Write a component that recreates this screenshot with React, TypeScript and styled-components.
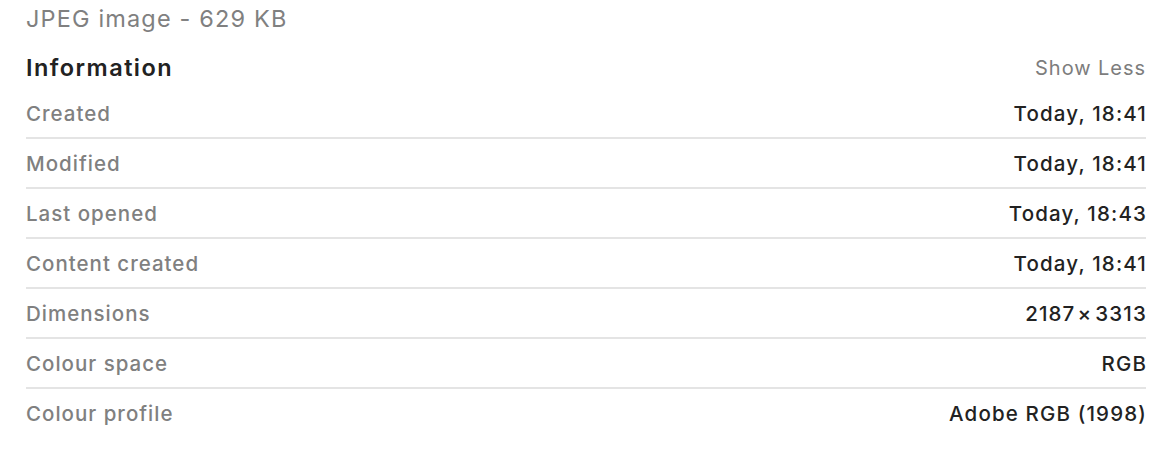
import React from "react";
import styled, { createGlobalStyle } from "styled-components";

const Global = createGlobalStyle`
  html, body { margin: 0; padding: 0; background: #ffffff; }
  body { font-family: Inter, "Noto Sans", "Liberation Sans", sans-serif; -webkit-font-smoothing: antialiased; }
`;

const Panel = styled.div`
  display: flex;
  flex-direction: column;
  padding: 0 28px 0 26px;
  width: 1174px;
  box-sizing: border-box;
`;

const FileKind = styled.div`
  font-size: 23.5px;
  font-weight: 400;
  letter-spacing: 1.15px;
  color: #808080;
  line-height: 37px;
  height: 37px;
`;

const SectionHeader = styled.div`
  display: flex;
  justify-content: space-between;
  align-items: center;
  height: 54px;
  margin-top: 3px;
  margin-bottom: -5px;
`;

const SectionTitle = styled.div`
  font-size: 23.5px;
  font-weight: 600;
  letter-spacing: 1.45px;
  color: #222222;
`;

const ToggleLink = styled.button`
  border: none;
  background: none;
  padding: 0;
  margin-top: 2px;
  font-family: inherit;
  font-size: 20px;
  font-weight: 400;
  letter-spacing: 0.95px;
  color: #7d7d7d;
  cursor: pointer;
`;

const Row = styled.div<{ $last?: boolean }>`
  display: flex;
  justify-content: space-between;
  align-items: center;
  height: 48px;
  border-bottom: 2px solid ${(p) => (p.$last ? "transparent" : "#e4e4e4")};
`;

const Label = styled.span`
  font-size: 20.5px;
  font-weight: 500;
  letter-spacing: 1px;
  color: #808080;
`;

const Value = styled.span`
  font-size: 20.5px;
  font-weight: 500;
  letter-spacing: 1.15px;
  color: #222222;
  margin-right: -1px;
`;

const Times = styled.span`
  margin: 0 3px 0 2px;
`;

const rows: [string, React.ReactNode][] = [
  ["Created", "Today, 18:41"],
  ["Modified", "Today, 18:41"],
  ["Last opened", "Today, 18:43"],
  ["Content created", "Today, 18:41"],
  [
    "Dimensions",
    <>
      2187<Times>×</Times>3313
    </>,
  ],
  ["Colour space", "RGB"],
  ["Colour profile", "Adobe RGB (1998)"],
];

export default function App() {
  return (
    <>
      <Global />
      <Panel>
        <FileKind>JPEG image - 629 KB</FileKind>
        <SectionHeader>
          <SectionTitle>Information</SectionTitle>
          <ToggleLink>Show Less</ToggleLink>
        </SectionHeader>
        {rows.map(([k, v], i) => (
          <Row key={k} $last={i === rows.length - 1}>
            <Label>{k}</Label>
            <Value>{v}</Value>
          </Row>
        ))}
      </Panel>
    </>
  );
}
